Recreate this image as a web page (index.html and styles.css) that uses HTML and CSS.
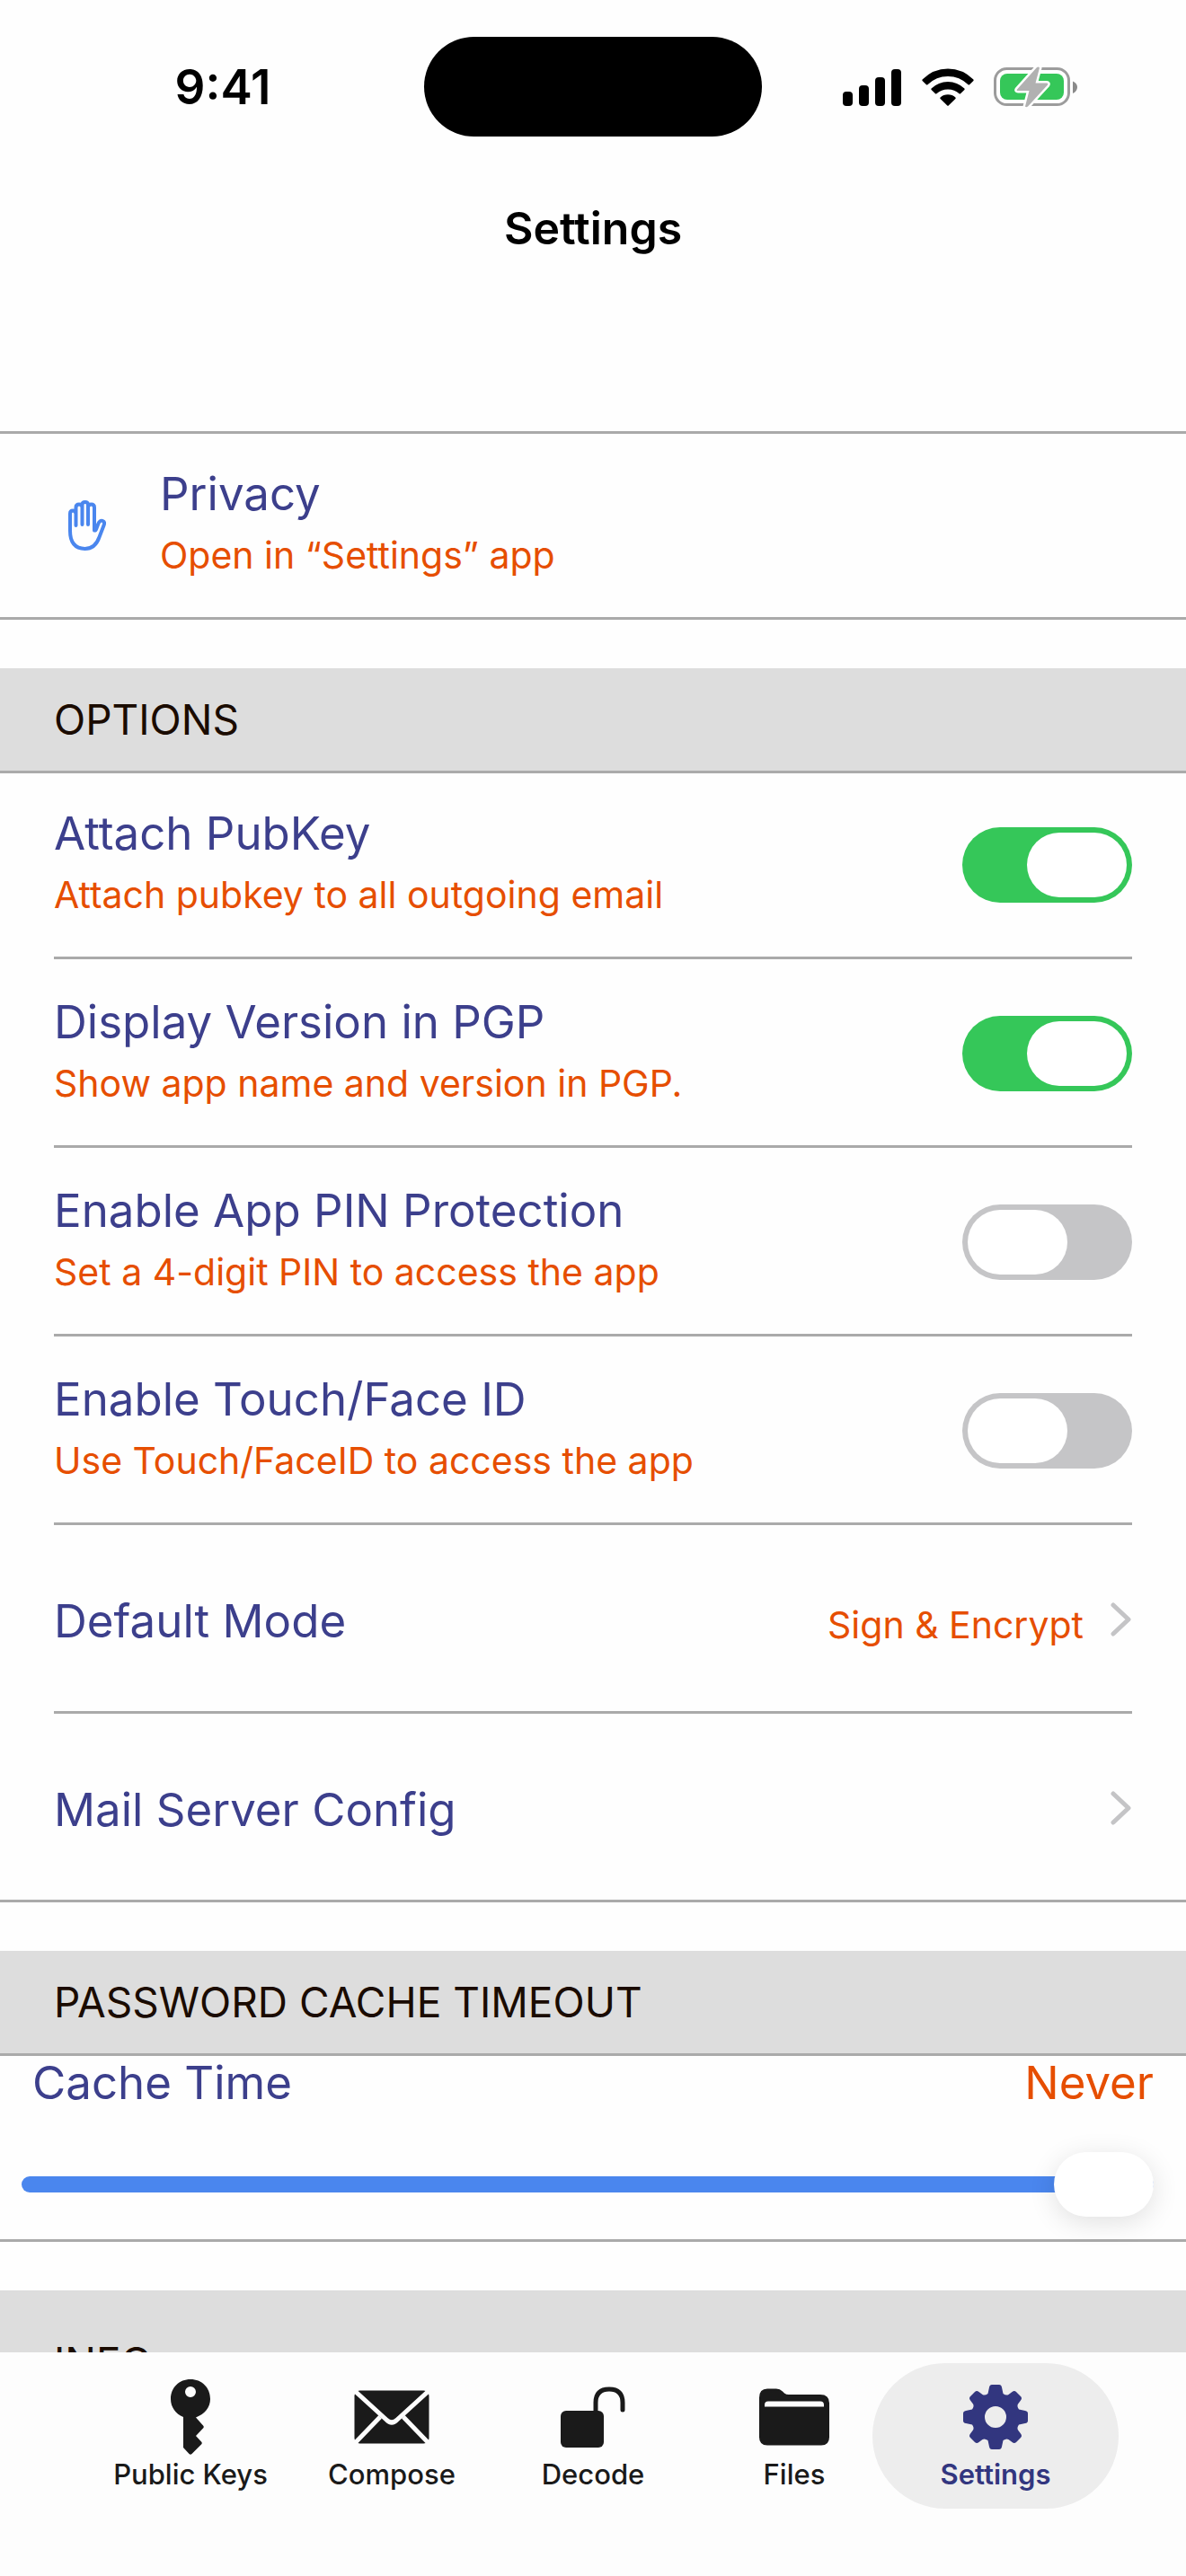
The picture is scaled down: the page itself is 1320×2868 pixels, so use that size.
FILE: index.html
```html
<!DOCTYPE html>
<html lang="en">
<head>
    <meta charset="UTF-8">
    <meta name="viewport" content="width=device-width, initial-scale=1.0">
    <title>Settings</title>
    <link rel="stylesheet" href="styles.css">
</head>
<body>

    <div class="status-bar">
        <span class="time">9:41</span>
        <div class="island"></div>
        <div class="status-icons">
            <svg width="66" height="42" viewBox="0 0 66 42">
                <rect x="0" y="26" width="11" height="16" rx="4"/>
                <rect x="18" y="19" width="11" height="23" rx="4"/>
                <rect x="36" y="10" width="11" height="32" rx="4"/>
                <rect x="54" y="1" width="11" height="41" rx="4"/>
            </svg>
            <svg width="58" height="42" viewBox="0 0 58 42">
                <path d="M0.600 12.600Q12.600 0.500 29 0.500T57.400 12.600Q58 13.300 57.400 14L53 18.200Q52.300 18.800 51.600 18.200Q42 9 29 9T6.400 18.200Q5.700 18.800 5 18.200L0.600 14Q0 13.300 0.600 12.600Z"/>
                <path d="M10.600 22.600Q18.500 15 29 15T47.400 22.600Q48 23.300 47.400 24L43 28.200Q42.300 28.800 41.600 28.200Q36.500 23.500 29 23.500T16.400 28.200Q15.700 28.800 15 28.200L10.600 24Q10 23.300 10.600 22.600Z"/>
                <path d="M20.600 32.500Q24 29.300 29 29.300T37.400 32.500Q38 33.200 37.400 34L29.700 41.600Q29 42.200 28.300 41.600L20.600 34Q20 33.200 20.600 32.500Z"/>
            </svg>
            <svg width="94" height="46" viewBox="0 0 94 46">
                <rect x="1.500" y="2.500" width="82" height="40" rx="13" fill="#fff" stroke="#9c9c9c" stroke-width="3"/>
                <rect x="7" y="8" width="71" height="29" rx="8" fill="#35c759"/>
                <path d="M88 16.500Q93 18.500 93 23T88 30Z" fill="#8a8a8a"/>
                <path d="M48 1L26 25.500Q25 27 27 27H39.500L35 44.500Q36 46 38 44.500L60 20.500Q61 18.500 59 18.500H46.500L51 1.500Q50 0 48 1Z" fill="#b1b1b1" stroke="#fff" stroke-width="5" paint-order="stroke" stroke-linejoin="round"/>
            </svg>
        </div>
    </div>

    <header>
        <h1>Settings</h1>
    </header>

    <main>
        <section class="group first-group">
            <button class="row privacy" type="button">
                <svg class="hand" width="42" height="56" viewBox="0 0 42 56">
                    <path d="M2 34V15Q2 11.500 5 11.500T8.500 15V28V8Q8.500 4.500 12 4.500T15.500 8V27V5Q15.500 2 18.700 2T22 5V27V8Q22 4.500 25.500 4.500T29 8V33.500Q30.500 34 31.500 31L33 27Q35 21.500 38.500 23Q41 24 39.500 28L34.500 41Q30 54 18.500 54Q2 53.500 2 34Z"/>
                </svg>
                <span class="text">
                    <span class="label">Privacy</span>
                    <span class="hint">Open in “Settings” app</span>
                </span>
            </button>
        </section>

        <section class="group">
            <h2>OPTIONS</h2>
            <div class="rows">
                <label class="row">
                    <span class="text">
                        <span class="label">Attach PubKey</span>
                        <span class="hint">Attach pubkey to all outgoing email</span>
                    </span>
                    <input class="switch" type="checkbox" checked>
                </label>
                <label class="row">
                    <span class="text">
                        <span class="label">Display Version in PGP</span>
                        <span class="hint">Show app name and version in PGP.</span>
                    </span>
                    <input class="switch" type="checkbox" checked>
                </label>
                <label class="row">
                    <span class="text">
                        <span class="label">Enable App PIN Protection</span>
                        <span class="hint">Set a 4-digit PIN to access the app</span>
                    </span>
                    <input class="switch" type="checkbox">
                </label>
                <label class="row">
                    <span class="text">
                        <span class="label">Enable Touch/Face ID</span>
                        <span class="hint">Use Touch/FaceID to access the app</span>
                    </span>
                    <input class="switch" type="checkbox">
                </label>
                <button class="row link-row" type="button">
                    <span class="label">Default Mode</span>
                    <span class="hint">Sign &amp; Encrypt</span>
                    <svg class="chevron" width="24" height="38" viewBox="0 0 24 38"><path d="M3 3L20 19L3 35"/></svg>
                </button>
                <button class="row link-row" type="button">
                    <span class="label">Mail Server Config</span>
                    <svg class="chevron" width="24" height="38" viewBox="0 0 24 38"><path d="M3 3L20 19L3 35"/></svg>
                </button>
            </div>
        </section>

        <section class="group">
            <h2>PASSWORD CACHE TIMEOUT</h2>
            <div class="cache">
                <div class="cache-head">
                    <label class="label" for="cacheTime">Cache Time</label>
                    <output class="label value" for="cacheTime">Never</output>
                </div>
                <input class="slider" type="range" id="cacheTime" min="0" max="100" value="100">
            </div>
        </section>

        <section class="group">
            <h2 class="info">INFO</h2>
        </section>
    </main>

    <nav>
        <button class="tab" type="button">
            <svg width="44" height="84" viewBox="0 0 44 84">
                <path fill-rule="evenodd" d="M22 0C9.500 0 0 9 0 22C0 31 5.500 38.500 14 42V76L20.500 83Q22 84.500 23.500 83L34.500 72Q35 71 34.500 70L28 63L36.500 54Q37 53 36.500 52L28 42.500C38 38.500 44 31 44 22C44 9 34.500 0 22 0ZM22 8A6 6 0 1 1 22 20A6 6 0 1 1 22 8Z"/>
            </svg>
            Public Keys
        </button>
        <button class="tab" type="button">
            <svg width="84" height="60" viewBox="0 0 84 60">
                <rect x="0.500" y="0.500" width="83" height="59" rx="6"/>
                <path d="M1 1L36 33Q42 39 48 33L83 1M1 59L29 30M83 59L55 30" fill="none" stroke="#fdfdfd" stroke-width="5"/>
            </svg>
            Compose
        </button>
        <button class="tab" type="button">
            <svg width="72" height="68" viewBox="0 0 72 68">
                <rect x="0" y="27" width="48" height="41" rx="6"/>
                <path d="M39 29V18Q39 3 54 3T69 18V26" fill="none" stroke="currentColor" stroke-width="5" stroke-linecap="round"/>
            </svg>
            Decode
        </button>
        <button class="tab" type="button">
            <svg width="78" height="63" viewBox="0 0 78 63">
                <path d="M9 0H19Q23 0 26 3L28 5Q30 6.500 33 6.500H68Q78 6.500 78 16V54Q78 63 69 63H9Q0 63 0 54V10Q0 0 9 0Z"/>
                <path d="M6 20V18Q6 14 10 14H68Q72 14 72 18V20Z" fill="#fdfdfd"/>
            </svg>
            Files
        </button>
        <button class="tab active" type="button">
            <svg width="72" height="72" viewBox="-36 -36 72 72">
                <path fill-rule="evenodd" d="M-7 -33Q-6.500 -36 -4 -36H4Q6.500 -36 7 -33L8.500 -26Q12 -23.500 14.500 -25L18.500 -28Q21 -30 23 -28L28 -23Q30 -21 28 -18.500L25 -14.500Q23.500 -12 26 -8.500L33 -7Q36 -6.500 36 -4V4Q36 6.500 33 7L26 8.500Q23.500 12 25 14.500L28 18.500Q30 21 28 23L23 28Q21 30 18.500 28L14.500 25Q12 23.500 8.500 26L7 33Q6.500 36 4 36H-4Q-6.500 36 -7 33L-8.500 26Q-12 23.500 -14.500 25L-18.500 28Q-21 30 -23 28L-28 23Q-30 21 -28 18.500L-25 14.500Q-23.500 12 -26 8.500L-33 7Q-36 6.500 -36 4V-4Q-36 -6.500 -33 -7L-26 -8.500Q-23.500 -12 -25 -14.500L-28 -18.500Q-30 -21 -28 -23L-23 -28Q-21 -30 -18.500 -28L-14.500 -25Q-12 -23.500 -8.500 -26ZM0 -12A12 12 0 1 0 0 12A12 12 0 1 0 0 -12Z"/>
            </svg>
            Settings
        </button>
    </nav>

</body>
</html>
```
FILE: styles.css
```css
* {
    box-sizing: border-box;
}

body {
    display: flex;
    flex-direction: column;
    height: 100vh;
    margin: 0;
    font-family: Inter, "Liberation Sans", sans-serif;
    background-color: #fefefe;
    overflow: hidden;
}

button {
    border: none;
    background: none;
    font-family: inherit;
    cursor: pointer;
}

/* Status bar */
.status-bar {
    display: grid;
    grid-template-columns: 1fr auto 1fr;
    align-items: center;
    padding-top: 41px;
}

.time {
    padding-left: 24px;
    font-size: 53px;
    font-weight: 600;
    line-height: 60px;
    text-align: center;
}

.island {
    width: 376px;
    height: 111px;
    border-radius: 56px;
    background-color: black;
}

.status-icons {
    display: flex;
    justify-content: center;
    align-items: center;
    gap: 22px;
    padding-right: 30px;
}

header {
    padding: 72px 0 196px;
    text-align: center;
}

h1 {
    margin: 0;
    font-size: 50px;
    font-weight: 600;
    line-height: 60px;
}

/* Settings list */
main {
    flex: 1;
    min-height: 0;
    overflow: hidden;
}

.group {
    margin-bottom: 54px;
}

.first-group {
    border-top: 3px solid #aaa;
    border-bottom: 3px solid #aaa;
}

h2 {
    margin: 0;
    padding: 27px 60px;
    border-bottom: 3px solid #aaa;
    background-color: #ddd;
    color: #1a0b00;
    font-size: 46px;
    font-weight: 400;
    line-height: 60px;
}

.info {
    padding-top: 50px;
}

.rows {
    padding: 0 60px;
    border-bottom: 3px solid #aaa;
}

.row {
    display: flex;
    justify-content: space-between;
    align-items: center;
    width: 100%;
    height: 204px;
    padding: 0;
    text-align: left;
}

.row + .row {
    height: 210px;
    border-top: 3px solid #aaa;
    padding-top: 3px;
}

.privacy {
    justify-content: flex-start;
    gap: 60px;
    padding: 0 76px;
}

.hand {
    fill: none;
    stroke: #4a86ee;
    stroke-width: 4;
    stroke-linejoin: round;
}

.text {
    display: flex;
    flex-direction: column;
    gap: 8px;
    padding-bottom: 2px;
}

.label {
    color: #3c3f8c;
    font-size: 51px;
    line-height: 60px;
}

.hint {
    color: #e64e00;
    font-size: 41px;
    line-height: 60px;
}

.switch {
    display: flex;
    appearance: none;
    width: 189px;
    height: 84px;
    margin: 0;
    padding: 6px;
    border-radius: 42px;
    background-color: #c5c5c7;
}

.switch::before {
    content: "";
    width: 111px;
    height: 72px;
    border-radius: 36px;
    background-color: white;
}

.switch:checked {
    justify-content: flex-end;
    background-color: #35c759;
}

.link-row .label {
    padding-top: 4px;
}

.link-row .hint {
    margin-left: auto;
    padding-top: 12px;
}

.chevron {
    margin-left: 30px;
    fill: none;
    stroke: #c4c4c6;
    stroke-width: 5;
    stroke-linecap: round;
    stroke-linejoin: round;
}

/* Cache slider */
.cache {
    height: 207px;
    border-bottom: 3px solid #aaa;
}

.cache-head {
    display: flex;
    justify-content: space-between;
    padding: 0 36px;
}

.value {
    color: #e64e00;
}

.slider {
    appearance: none;
    display: block;
    width: calc(100% - 60px);
    height: 72px;
    margin: 47px 36px 0 24px;
    background: none;
}

.slider::-webkit-slider-runnable-track {
    height: 18px;
    border-radius: 9px;
    background-color: #4a86ee;
}

.slider::-webkit-slider-thumb {
    appearance: none;
    width: 111px;
    height: 72px;
    margin-top: -27px;
    border-radius: 36px;
    background-color: white;
    box-shadow: 0 6px 30px rgba(0, 0, 0, 0.12);
}

/* Tab bar */
nav {
    display: grid;
    grid-template-columns: repeat(5, 1fr);
    height: 249px;
    padding: 12px 100px 0;
    background-color: #fdfdfd;
}

.tab {
    display: flex;
    flex-direction: column;
    align-items: center;
    height: 162px;
    margin: 0 -25px;
    padding: 0;
    color: #1a1a1a;
    fill: currentColor;
    font-size: 31px;
    font-weight: 500;
    line-height: 36px;
}

.tab svg {
    height: 120px;
    margin-bottom: -14px;
}

.active {
    border-radius: 81px;
    background-color: #ededed;
    color: #32367f;
    font-weight: 600;
}
```
